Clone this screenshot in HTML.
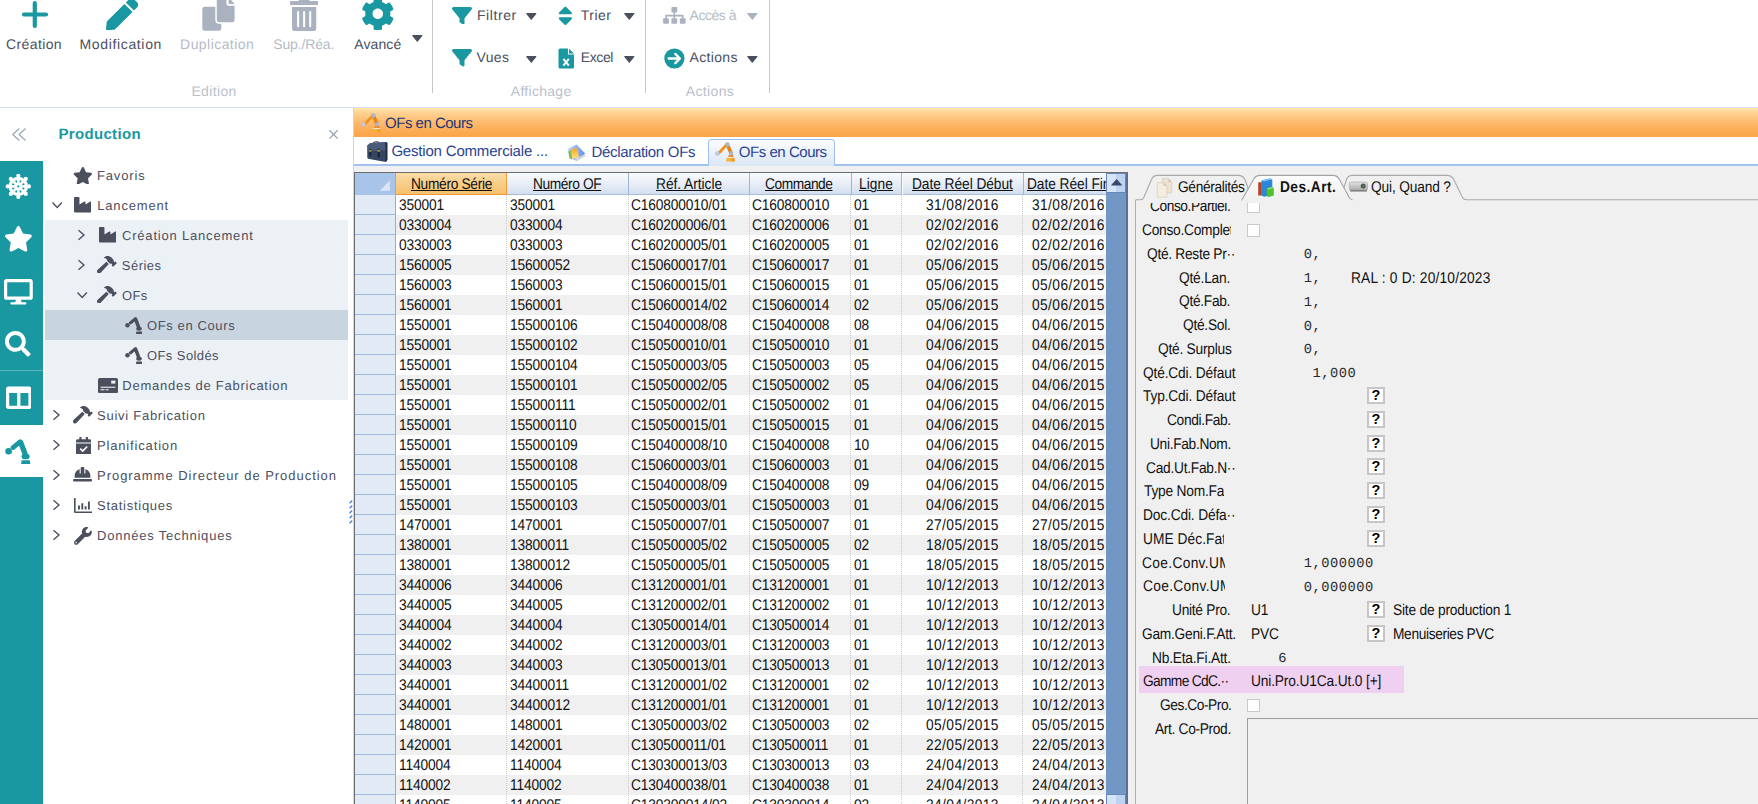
<!DOCTYPE html><html lang="fr"><head><meta charset="utf-8"><title>OFs en Cours</title><style>*{box-sizing:border-box;margin:0;padding:0}
html,body{width:1758px;height:804px;overflow:hidden;background:#fff}
body{font-family:"Liberation Sans",sans-serif;color:#000;text-rendering:geometricPrecision}
#app{position:relative;width:1758px;height:804px;overflow:hidden;background:#fff}
.abs{position:absolute}
.t{position:absolute;white-space:nowrap;line-height:1}
/* ribbon */
.rl{position:absolute;white-space:nowrap;font-size:14px;line-height:16px;color:#4b4f5e}
.rl.dis{color:#b4bbc6}
.gl{position:absolute;white-space:nowrap;font-size:14px;line-height:16px;color:#b9bfcb}
.vsep{position:absolute;top:0;width:1px;height:93px;background:#c4c6cc}
/* nav */
.tl{position:absolute;white-space:nowrap;font-size:13.4px;line-height:30px;height:30px;color:#4b4f5e;letter-spacing:.45px}
/* grid */
.row{position:absolute;left:355px;width:753px;height:20px;font-size:15.5px;line-height:20px;letter-spacing:-.17px;color:#111}
.row.alt{background:#f0f0f0}
.row span{position:absolute;top:1px;white-space:nowrap;font-size:15.5px;transform:scaleX(.8871);transform-origin:0 0}
.rh{position:absolute;left:355px;width:40px;height:20px;background:#e1eaf6;border-bottom:1px solid #9db7d4;border-right:1px solid #9db7d4}
.ch{position:absolute;top:173px;height:22px;font-size:13.75px;line-height:18px;text-align:left;text-decoration:underline;letter-spacing:-.15px;color:#111;background:linear-gradient(#f9fbfe,#e4ebf5 60%,#d3deee);border-right:1px solid #9fb6d3;border-bottom:1px solid #a9bedb;white-space:nowrap;overflow:hidden}
.vline{position:absolute;top:195px;width:0;height:609px;border-left:1px dotted #c9c9c9}
/* panel */
.pl{position:absolute;white-space:nowrap;font-size:13.75px;line-height:18px;letter-spacing:-.2px;color:#111;text-align:right}
.pv{position:absolute;white-space:nowrap;transform:scaleX(.8871);transform-origin:0 0;font-size:15.5px;line-height:18px;letter-spacing:-.2px;color:#111}
.pm{position:absolute;white-space:nowrap;font-family:"Liberation Mono",monospace;font-size:13.75px;line-height:18px;color:#2b2b2b}
.qb{position:absolute;width:17.6px;height:17px;border:2.5px solid #c6c6c6;background:#fff;font-size:14.5px;font-weight:bold;line-height:15.4px;text-align:center;color:#000}
.cb{position:absolute;width:13px;height:13px;border:1px solid #c9c9c9;background:#fff}
.ch span{font-size:15.5px;text-decoration:underline;text-underline-offset:1.4px;text-decoration-thickness:1.1px;transform:scaleX(.8871);transform-origin:0 0}
</style></head><body><div id="app">
<div class="abs" style="left:0;top:0;width:1758px;height:107px;background:#fff"></div>
<div class="abs" style="left:0;top:107px;width:1758px;height:1px;background:#d5e1ee"></div>
<svg style="position:absolute;left:18px;top:-2px" width="34" height="34" viewBox="18 -2 34 34" ><path d="M24 14.5H46M34.8 3.2V26" stroke="#1998a1" stroke-width="4.2" stroke-linecap="round" fill="none"/></svg>
<div class="rl" style="left:6.0px;top:35.90px;letter-spacing:0.385px">Création</div>
<svg style="position:absolute;left:105.6px;top:-2.1px" width="32.4" height="32.4" viewBox="0 0 512 512" preserveAspectRatio="xMidYMid meet"><path fill="#1998a1" d="M290.740 93.240l128.020 128.020-277.990 277.990-114.140 12.600C11.350 513.540-1.560 500.620.140 485.340l12.700-114.220 277.900-277.880zm207.200-19.060l-60.110-60.110c-18.750-18.750-49.160-18.750-67.910 0l-56.550 56.550 128.020 128.020 56.550-56.550c18.750-18.760 18.750-49.160 0-67.910z"/></svg>
<div class="rl" style="left:79.5px;top:35.90px;letter-spacing:0.65px">Modification</div>
<svg style="position:absolute;left:200px;top:-5px" width="38" height="38" viewBox="200 -5 38 38" ><rect x="202.3" y="6.8" width="19" height="23.9" rx="2.6" fill="#a9b2be"/><rect x="215.3" y="-6" width="21" height="29.7" rx="3.6" fill="#fff"/><path d="M219.2 -4H226.4V3.4a2.4 2.4 0 0 0 2.4 2.4H234.6V19.9a2.4 2.4 0 0 1 -2.4 2.4H219.2a2.4 2.4 0 0 1 -2.4 -2.4V-1.600a2.4 2.4 0 0 1 2.400 -2.4Z" fill="#a9b2be"/><path d="M228.6 -3V4H234.6Z" fill="#a9b2be"/></svg>
<div class="rl dis" style="left:180.1px;top:35.90px;letter-spacing:0.439px">Duplication</div>
<svg style="position:absolute;left:289.9px;top:-1.4px" width="28.3" height="32.3" viewBox="0 0 448 512" preserveAspectRatio="xMidYMid meet"><path fill="#a9b2be" d="M32 464a48 48 0 0 0 48 48h288a48 48 0 0 0 48-48V128H32zm272-256a16 16 0 0 1 32 0v224a16 16 0 0 1-32 0zm-96 0a16 16 0 0 1 32 0v224a16 16 0 0 1-32 0zm-96 0a16 16 0 0 1 32 0v224a16 16 0 0 1-32 0zM432 32H312l-9.400-18.700A24 24 0 0 0 281.100 0H166.800a23.720 23.720 0 0 0-21.400 13.300L136 32H16A16 16 0 0 0 0 48v32a16 16 0 0 0 16 16h416a16 16 0 0 0 16-16V48a16 16 0 0 0-16-16z"/></svg>
<div class="rl dis" style="left:273.25px;top:35.90px;letter-spacing:-0.141px">Sup./Réa.</div>
<svg style="position:absolute;left:361.0px;top:-2.9px" width="33.6" height="33.6" viewBox="0 0 512 512" preserveAspectRatio="xMidYMid meet"><path fill="#1998a1" d="M487.4 315.7l-42.6-24.6c4.3-23.2 4.3-47 0-70.2l42.6-24.6c4.900-2.800 7.100-8.600 5.500-14-11.100-35.600-30-67.800-54.700-94.600-3.800-4.100-10-5.100-14.800-2.300L380.800 110c-17.900-15.400-38.500-27.300-60.800-35.100V25.800c0-5.600-3.900-10.500-9.400-11.700-36.700-8.200-74.300-7.800-109.200 0-5.500 1.200-9.400 6.100-9.400 11.700V75c-22.200 7.900-42.800 19.800-60.800 35.100L88.700 85.500c-4.900-2.800-11-1.900-14.800 2.300-24.700 26.700-43.600 58.900-54.700 94.600-1.700 5.400.6 11.200 5.500 14L67.300 221c-4.300 23.200-4.300 47 0 70.200l-42.600 24.600c-4.900 2.800-7.100 8.600-5.500 14 11.100 35.600 30 67.800 54.700 94.600 3.800 4.100 10 5.100 14.800 2.300l42.600-24.600c17.900 15.400 38.500 27.300 60.800 35.100v49.200c0 5.600 3.900 10.500 9.400 11.700 36.700 8.200 74.300 7.800 109.200 0 5.500-1.200 9.400-6.100 9.400-11.700v-49.200c22.200-7.900 42.800-19.800 60.800-35.100l42.600 24.600c4.900 2.800 11 1.900 14.800-2.300 24.700-26.700 43.600-58.900 54.700-94.600 1.500-5.500-.7-11.300-5.600-14.100zM256 336c-44.100 0-80-35.900-80-80s35.900-80 80-80 80 35.900 80 80-35.900 80-80 80z"/></svg>
<div class="rl" style="left:354.25px;top:35.90px;letter-spacing:0.108px">Avancé</div>
<svg style="position:absolute;left:410.9px;top:33.5px" width="12.6" height="8.6" viewBox="-1 -1 12.6 8.6" ><path d="M.8 .6H9.799999999999999L5.3 6.0Z" fill="#4b4f5e" stroke="#4b4f5e" stroke-width="1.2" stroke-linejoin="round"/></svg>
<div class="vsep" style="left:432px"></div>
<div class="vsep" style="left:645px"></div>
<div class="vsep" style="left:769px"></div>
<svg style="position:absolute;left:451.6px;top:6.6px" width="20" height="17.5" viewBox="0 32 512 448" preserveAspectRatio="none"><path fill="#1998a1" d="M3.9 54.9C10.5 40.9 24.5 32 40 32H472c15.500 0 29.500 8.900 36.100 22.900s4.600 30.500-5.200 42.500L320 320.900V448c0 12.100-6.800 23.200-17.700 28.600s-23.800 4.300-33.500-3l-64-48c-8.100-6-12.800-15.500-12.800-25.600V320.900L9 97.300C-.7 85.400-2.800 68.800 3.900 54.900z"/></svg>
<div class="rl" style="left:477.0px;top:7.40px;letter-spacing:0.567px">Filtrer</div>
<svg style="position:absolute;left:524.6px;top:12.1px" width="12.6" height="8.6" viewBox="-1 -1 12.6 8.6" ><path d="M.8 .6H9.799999999999999L5.3 6.0Z" fill="#4b4f5e" stroke="#4b4f5e" stroke-width="1.2" stroke-linejoin="round"/></svg>
<svg style="position:absolute;left:451.6px;top:49.1px" width="20" height="17.5" viewBox="0 32 512 448" preserveAspectRatio="none"><path fill="#1998a1" d="M3.9 54.9C10.5 40.9 24.5 32 40 32H472c15.500 0 29.500 8.900 36.100 22.900s4.600 30.500-5.200 42.500L320 320.900V448c0 12.100-6.800 23.200-17.700 28.600s-23.800 4.300-33.500-3l-64-48c-8.100-6-12.800-15.500-12.800-25.600V320.900L9 97.300C-.7 85.400-2.800 68.800 3.900 54.900z"/></svg>
<div class="rl" style="left:476.5px;top:49.25px;letter-spacing:0.34px">Vues</div>
<svg style="position:absolute;left:524.6px;top:54.6px" width="12.6" height="8.6" viewBox="-1 -1 12.6 8.6" ><path d="M.8 .6H9.799999999999999L5.3 6.0Z" fill="#4b4f5e" stroke="#4b4f5e" stroke-width="1.2" stroke-linejoin="round"/></svg>
<svg style="position:absolute;left:558.2px;top:3.9px" width="14.8" height="23.7" viewBox="0 0 320 512" ><path fill="#1998a1" d="M41 288h238c21.400 0 32.100 25.900 17 41L177 448c-9.400 9.400-24.600 9.400-33.900 0L24 329c-15.100-15.100-4.400-41 17-41zm255-105L177 64c-9.400-9.400-24.600-9.400-33.900 0L24 183c-15.100 15.100-4.400 41 17 41h238c21.400 0 32.100-25.900 17-41z"/></svg>
<div class="rl" style="left:580.75px;top:7.40px;letter-spacing:0.497px">Trier</div>
<svg style="position:absolute;left:622.9px;top:12.1px" width="12.6" height="8.6" viewBox="-1 -1 12.6 8.6" ><path d="M.8 .6H9.799999999999999L5.3 6.0Z" fill="#4b4f5e" stroke="#4b4f5e" stroke-width="1.2" stroke-linejoin="round"/></svg>
<svg style="position:absolute;left:557.5px;top:47.5px" width="17" height="21" viewBox="557.5 47.500 17 21" ><path d="M559.6 47.9H568.3L573.5 53.1V66.5a1.6 1.6 0 0 1 -1.6 1.6H559.6a1.6 1.6 0 0 1 -1.6 -1.6V49.500a1.600 1.600 0 0 1 1.600 -1.600Z" fill="#1998a1"/><path d="M568 47.5V53.5H574" fill="none" stroke="#fff" stroke-width="1.1"/><path d="M562.9 58.3L568.300 65.200M568.300 58.300L562.900 65.200" stroke="#fff" stroke-width="2" fill="none"/></svg>
<div class="rl" style="left:580.75px;top:49.25px;letter-spacing:-0.397px">Excel</div>
<svg style="position:absolute;left:622.9px;top:54.6px" width="12.6" height="8.6" viewBox="-1 -1 12.6 8.6" ><path d="M.8 .6H9.799999999999999L5.3 6.0Z" fill="#4b4f5e" stroke="#4b4f5e" stroke-width="1.2" stroke-linejoin="round"/></svg>
<svg style="position:absolute;left:662px;top:6px" width="25" height="19" viewBox="662 6 25 19" ><rect x="671.400" y="6.900" width="5.900" height="5.600" rx="1.1" fill="#a9b2be"/><path d="M674.300 12V18.500M666 19V15.600H682.700V19" stroke="#a9b2be" stroke-width="1.6" fill="none"/><rect x="663.100" y="18.200" width="5.800" height="5.600" rx="1.1" fill="#a9b2be"/><rect x="671.400" y="18.200" width="5.800" height="5.600" rx="1.1" fill="#a9b2be"/><rect x="679.800" y="18.200" width="5.800" height="5.600" rx="1.1" fill="#a9b2be"/></svg>
<div class="rl dis" style="left:689.5px;top:7.40px;letter-spacing:-0.459px">Accès à</div>
<svg style="position:absolute;left:746.3px;top:12.1px" width="12.6" height="8.6" viewBox="-1 -1 12.6 8.6" ><path d="M.8 .6H9.799999999999999L5.3 6.0Z" fill="#a9b2be" stroke="#a9b2be" stroke-width="1.2" stroke-linejoin="round"/></svg>
<svg style="position:absolute;left:664px;top:47.5px" width="21" height="21" viewBox="664 47.500 21 21" ><circle cx="674.400" cy="58" r="10.100" fill="#1998a1"/><path d="M668.600 58H679.500M675.300 53.400L679.900 58L675.300 62.600" stroke="#fff" stroke-width="2.300" fill="none" stroke-linecap="round" stroke-linejoin="round"/></svg>
<div class="rl" style="left:689.5px;top:49.25px;letter-spacing:0.333px">Actions</div>
<svg style="position:absolute;left:746.3px;top:54.6px" width="12.6" height="8.6" viewBox="-1 -1 12.6 8.6" ><path d="M.8 .6H9.799999999999999L5.3 6.0Z" fill="#4b4f5e" stroke="#4b4f5e" stroke-width="1.2" stroke-linejoin="round"/></svg>
<div class="gl" style="left:191.4px;top:82.75px;letter-spacing:0.363px">Edition</div>
<div class="gl" style="left:510.75px;top:82.75px;letter-spacing:0.292px">Affichage</div>
<div class="gl" style="left:685.75px;top:82.75px;letter-spacing:0.368px">Actions</div>
<div class="abs" style="left:0;top:160.5px;width:43.4px;height:644px;background:#1998a1"></div>
<div class="abs" style="left:0;top:370.3px;width:43.4px;height:1px;background:#58b4bb"></div>
<div class="abs" style="left:0;top:424.6px;width:43.4px;height:52.8px;background:#fff"></div>
<svg style="position:absolute;left:10px;top:126px" width="18" height="17" viewBox="10 126 18 17" ><path d="M19.300 128.400L12.800 134.400L19.300 140.400M25.600 128.400L19.100 134.400L25.600 140.400" stroke="#a4acb9" stroke-width="1.400" fill="none"/></svg>
<div class="t" style="left:58.5px;top:125.5px;font-size:15px;line-height:17px;font-weight:bold;color:#1998a1;letter-spacing:0.323px">Production</div>
<svg style="position:absolute;left:327px;top:128px" width="13" height="13" viewBox="327 128 13 13" ><path d="M329.400 130.300L337.700 138.600M337.700 130.300L329.400 138.600" stroke="#9aa2ae" stroke-width="1.300" fill="none"/></svg>
<svg style="position:absolute;left:4px;top:172px" width="29" height="29" viewBox="4 172 29 29" ><circle cx="18.3" cy="186.4" r="8.100" fill="none" stroke="#fff" stroke-width="3.300"/><circle cx="18.3" cy="186.4" r="3.500" fill="#fff"/><path d="M20.30 186.40L26.30 186.40" stroke="#fff" stroke-width="2.700"/><circle cx="28.90" cy="186.40" r="2.100" fill="#fff"/><path d="M19.71 187.81L23.96 192.06" stroke="#fff" stroke-width="2.700"/><circle cx="25.80" cy="193.90" r="2.100" fill="#fff"/><path d="M18.30 188.40L18.30 194.40" stroke="#fff" stroke-width="2.700"/><circle cx="18.30" cy="197.00" r="2.100" fill="#fff"/><path d="M16.89 187.81L12.64 192.06" stroke="#fff" stroke-width="2.700"/><circle cx="10.80" cy="193.90" r="2.100" fill="#fff"/><path d="M16.30 186.40L10.30 186.40" stroke="#fff" stroke-width="2.700"/><circle cx="7.70" cy="186.40" r="2.100" fill="#fff"/><path d="M16.89 184.99L12.64 180.74" stroke="#fff" stroke-width="2.700"/><circle cx="10.80" cy="178.90" r="2.100" fill="#fff"/><path d="M18.30 184.40L18.30 178.40" stroke="#fff" stroke-width="2.700"/><circle cx="18.30" cy="175.80" r="2.100" fill="#fff"/><path d="M19.71 184.99L23.96 180.74" stroke="#fff" stroke-width="2.700"/><circle cx="25.80" cy="178.90" r="2.100" fill="#fff"/><circle cx="18.3" cy="186.4" r="1.100" fill="#1998a1"/></svg>
<svg style="position:absolute;left:3.9px;top:226.4px" width="28.8" height="25.6" viewBox="0 0 576 512" preserveAspectRatio="xMidYMid meet"><path fill="#fff" d="M259.3 17.8L194 150.2 47.9 171.5c-26.2 3.8-36.7 36.1-17.7 54.6l105.7 103-25 145.5c-4.5 26.3 23.2 46 46.4 33.7L288 439.6l130.7 68.7c23.2 12.2 50.9-7.4 46.4-33.7l-25-145.5 105.7-103c19-18.500 8.5-50.800-17.7-54.600L382 150.200 316.700 17.800c-11.700-23.600-45.600-23.900-57.400 0z"/></svg>
<svg style="position:absolute;left:3.8px;top:279px" width="28.8" height="25.6" viewBox="0 0 576 512" preserveAspectRatio="xMidYMid meet"><path fill="#fff" d="M528 0H48C21.500 0 0 21.500 0 48v320c0 26.500 21.500 48 48 48h192l-16 48h-72c-13.300 0-24 10.700-24 24s10.700 24 24 24h272c13.300 0 24-10.700 24-24s-10.700-24-24-24h-72l-16-48h192c26.500 0 48-21.500 48-48V48c0-26.500-21.500-48-48-48zm-16 352H64V64h448v288z"/></svg>
<svg style="position:absolute;left:5.3px;top:331px" width="25.6" height="25.6" viewBox="0 0 512 512" preserveAspectRatio="xMidYMid meet"><path fill="#fff" d="M505 442.7L405.3 343c-4.5-4.5-10.6-7-17-7H372c27.600-35.300 44-79.700 44-128C416 93.100 322.900 0 208 0S0 93.100 0 208s93.100 208 208 208c48.300 0 92.700-16.400 128-44v16.300c0 6.400 2.500 12.500 7 17l99.700 99.700c9.400 9.400 24.600 9.400 33.900 0l28.300-28.300c9.400-9.400 9.400-24.600.100-34zM208 336c-70.700 0-128-57.200-128-128 0-70.700 57.200-128 128-128 70.700 0 128 57.200 128 128 0 70.700-57.200 128-128 128z"/></svg>
<svg style="position:absolute;left:5.5px;top:384.9px" width="25.6" height="25.6" viewBox="0 0 512 512" preserveAspectRatio="xMidYMid meet"><path fill="#fff" d="M464 32H48C21.490 32 0 53.490 0 80v352c0 26.510 21.490 48 48 48h416c26.510 0 48-21.490 48-48V80c0-26.510-21.490-48-48-48zM224 416H64V160h160v256zm224 0H288V160h160v256z"/></svg>
<svg style="position:absolute;left:5.3px;top:439px" width="26.0" height="26.0" viewBox="0 0 26 26" ><circle cx="3.600" cy="12.300" r="3.300" fill="#1998a1"/><path d="M8 8.600L15 2.900" fill="none" stroke="#1998a1" stroke-width="4.600" stroke-linecap="round"/><path d="M15.600 3.200L19.800 14" fill="none" stroke="#1998a1" stroke-width="5.200" stroke-linecap="round"/><ellipse cx="20.600" cy="17.400" rx="4.100" ry="2.900" fill="#1998a1"/><path d="M16.700 21.200H24.700L25.300 25H16.100Z" fill="#1998a1"/></svg>
<div class="abs" style="left:45px;top:220.400px;width:303.400px;height:179.800px;background:#ecf1f5"></div>
<div class="abs" style="left:45px;top:310.400px;width:303.400px;height:29.600px;background:#c8d5e1"></div>
<svg style="position:absolute;left:72.9px;top:166.7px" width="19.7" height="17.5" viewBox="0 0 576 512" preserveAspectRatio="xMidYMid meet"><path fill="#4b4f5e" d="M259.3 17.8L194 150.2 47.9 171.5c-26.2 3.8-36.7 36.1-17.7 54.6l105.7 103-25 145.5c-4.5 26.3 23.2 46 46.4 33.7L288 439.6l130.7 68.7c23.2 12.2 50.9-7.4 46.4-33.7l-25-145.5 105.7-103c19-18.500 8.5-50.800-17.7-54.600L382 150.200 316.700 17.800c-11.700-23.600-45.600-23.900-57.400 0z"/></svg>
<div class="tl" style="left:97.0px;top:160.5px;letter-spacing:0.839px;font-size:13px">Favoris</div>
<svg style="position:absolute;left:50.5px;top:201px" width="13" height="9" viewBox="50.5 201 13 9" ><path d="M52.0 202.5L56.7 207.4L61.4 202.5" stroke="#4b4f5e" stroke-width="1.350" fill="none"/></svg>
<svg style="position:absolute;left:73.75px;top:196.2px" width="17.5" height="17.5" viewBox="0 0 512 512" preserveAspectRatio="xMidYMid meet"><path fill="#4b4f5e" d="M475.115 163.781L336 252.309v-68.280c0-18.916-20.931-30.399-36.885-20.248L160 252.309V56c0-13.255-10.745-24-24-24H24C10.745 32 0 42.745 0 56v400c0 13.255 10.745 24 24 24h464c13.255 0 24-10.745 24-24V184.029c0-18.917-20.931-30.399-36.885-20.248z"/></svg>
<div class="tl" style="left:97.25px;top:190.5px;letter-spacing:0.825px;font-size:13px">Lancement</div>
<svg style="position:absolute;left:77.1px;top:229px" width="10" height="12" viewBox="77.1 229 10 12" ><path d="M78.6 230.3L84.1 235L78.6 239.7" stroke="#4b4f5e" stroke-width="1.350" fill="none"/></svg>
<svg style="position:absolute;left:98.75px;top:226.2px" width="17.5" height="17.5" viewBox="0 0 512 512" preserveAspectRatio="xMidYMid meet"><path fill="#4b4f5e" d="M475.115 163.781L336 252.309v-68.280c0-18.916-20.931-30.399-36.885-20.248L160 252.309V56c0-13.255-10.745-24-24-24H24C10.745 32 0 42.745 0 56v400c0 13.255 10.745 24 24 24h464c13.255 0 24-10.745 24-24V184.029c0-18.917-20.931-30.399-36.885-20.248z"/></svg>
<div class="tl" style="left:122.0px;top:220.5px;letter-spacing:0.807px;font-size:13px">Création Lancement</div>
<svg style="position:absolute;left:77.1px;top:259px" width="10" height="12" viewBox="77.1 259 10 12" ><path d="M78.6 260.3L84.1 265L78.6 269.7" stroke="#4b4f5e" stroke-width="1.350" fill="none"/></svg>
<svg style="position:absolute;left:97.25px;top:255.5px" width="19.7" height="17.5" viewBox="0 0 576 512" preserveAspectRatio="xMidYMid meet"><path fill="#4b4f5e" d="M571.310 193.940l-22.630-22.630c-6.250-6.250-16.380-6.250-22.630 0l-11.310 11.310-28.900-28.900c5.630-21.310.360-44.900-16.350-61.610l-45.250-45.250c-62.480-62.480-163.790-62.480-226.280 0l90.510 45.250v18.750c0 16.970 6.740 33.250 18.750 45.250l49.140 49.140c16.710 16.710 40.300 21.980 61.610 16.350l28.900 28.900-11.310 11.310c-6.250 6.250-6.250 16.380 0 22.630l22.630 22.630c6.250 6.250 16.380 6.250 22.630 0l90.510-90.510c6.230-6.240 6.230-16.370-.020-22.620zm-286.720-15.200c-3.700-3.700-6.840-7.790-9.850-11.950L19.640 404.960c-25.570 23.880-26.260 64.190-1.530 88.930s65.050 24.050 88.930-1.530l238.130-255.070c-3.960-2.910-7.900-5.870-11.440-9.410l-49.140-49.140z"/></svg>
<div class="tl" style="left:121.8px;top:250.5px;letter-spacing:0.473px;font-size:13px">Séries</div>
<svg style="position:absolute;left:75.5px;top:291px" width="13" height="9" viewBox="75.5 291 13 9" ><path d="M77.0 292.5L81.7 297.4L86.4 292.5" stroke="#4b4f5e" stroke-width="1.350" fill="none"/></svg>
<svg style="position:absolute;left:97.25px;top:285.5px" width="19.7" height="17.5" viewBox="0 0 576 512" preserveAspectRatio="xMidYMid meet"><path fill="#4b4f5e" d="M571.310 193.940l-22.630-22.630c-6.250-6.250-16.380-6.250-22.630 0l-11.310 11.310-28.900-28.900c5.630-21.310.360-44.900-16.350-61.610l-45.250-45.250c-62.480-62.480-163.790-62.480-226.280 0l90.510 45.250v18.750c0 16.970 6.740 33.250 18.750 45.250l49.140 49.140c16.710 16.710 40.300 21.980 61.610 16.350l28.900 28.900-11.310 11.310c-6.250 6.250-6.250 16.380 0 22.630l22.630 22.630c6.250 6.250 16.380 6.250 22.630 0l90.510-90.510c6.230-6.240 6.230-16.370-.020-22.620zm-286.720-15.200c-3.700-3.700-6.840-7.790-9.850-11.950L19.640 404.960c-25.570 23.880-26.260 64.190-1.530 88.930s65.050 24.050 88.930-1.530l238.130-255.070c-3.960-2.910-7.900-5.870-11.440-9.410l-49.140-49.140z"/></svg>
<div class="tl" style="left:122.0px;top:280.5px;letter-spacing:0.396px;font-size:13px">OFs</div>
<svg style="position:absolute;left:124.75px;top:316.9px" width="17.68" height="17.68" viewBox="0 0 26 26" ><circle cx="3.600" cy="12.300" r="3.300" fill="#4b4f5e"/><path d="M8 8.600L15 2.900" fill="none" stroke="#4b4f5e" stroke-width="4.600" stroke-linecap="round"/><path d="M15.600 3.200L19.800 14" fill="none" stroke="#4b4f5e" stroke-width="5.200" stroke-linecap="round"/><ellipse cx="20.600" cy="17.400" rx="4.100" ry="2.900" fill="#4b4f5e"/><path d="M16.700 21.200H24.700L25.300 25H16.100Z" fill="#4b4f5e"/></svg>
<div class="tl" style="left:147.0px;top:310.5px;letter-spacing:0.611px;font-size:13px">OFs en Cours</div>
<svg style="position:absolute;left:124.75px;top:346.9px" width="17.68" height="17.68" viewBox="0 0 26 26" ><circle cx="3.600" cy="12.300" r="3.300" fill="#4b4f5e"/><path d="M8 8.600L15 2.900" fill="none" stroke="#4b4f5e" stroke-width="4.600" stroke-linecap="round"/><path d="M15.600 3.200L19.800 14" fill="none" stroke="#4b4f5e" stroke-width="5.200" stroke-linecap="round"/><ellipse cx="20.600" cy="17.400" rx="4.100" ry="2.900" fill="#4b4f5e"/><path d="M16.700 21.200H24.700L25.300 25H16.100Z" fill="#4b4f5e"/></svg>
<div class="tl" style="left:147.0px;top:340.5px;letter-spacing:0.408px;font-size:13px">OFs Soldés</div>
<svg style="position:absolute;left:97.7px;top:377.8px" width="20" height="15.2" viewBox="0 0 20 15.200" ><rect width="20" height="15.200" rx="1.800" fill="#4b4f5e"/><rect x="13.200" y="2.600" width="4.200" height="3" fill="#ecf1f5"/><rect x="2.600" y="8.700" width="14.800" height="1.100" fill="#ecf1f5"/><rect x="2.600" y="11.200" width="4" height="1.100" fill="#ecf1f5"/><rect x="7.600" y="11.200" width="3" height="1.100" fill="#ecf1f5"/></svg>
<div class="tl" style="left:122.3px;top:370.5px;letter-spacing:0.745px;font-size:13px">Demandes de Fabrication</div>
<svg style="position:absolute;left:52.3px;top:409px" width="10" height="12" viewBox="52.3 409 10 12" ><path d="M53.8 410.3L59.3 415L53.8 419.7" stroke="#4b4f5e" stroke-width="1.350" fill="none"/></svg>
<svg style="position:absolute;left:72.9px;top:406.0px" width="19.7" height="17.5" viewBox="0 0 576 512" preserveAspectRatio="xMidYMid meet"><path fill="#4b4f5e" d="M571.310 193.940l-22.630-22.630c-6.250-6.250-16.380-6.250-22.630 0l-11.310 11.310-28.900-28.900c5.630-21.310.360-44.900-16.350-61.610l-45.250-45.250c-62.480-62.480-163.790-62.480-226.280 0l90.510 45.250v18.750c0 16.970 6.740 33.250 18.750 45.250l49.140 49.140c16.710 16.710 40.300 21.980 61.610 16.350l28.900 28.900-11.310 11.310c-6.250 6.250-6.250 16.380 0 22.630l22.630 22.630c6.250 6.250 16.380 6.250 22.630 0l90.510-90.510c6.230-6.240 6.230-16.370-.020-22.620zm-286.720-15.200c-3.700-3.700-6.840-7.790-9.850-11.950L19.640 404.960c-25.570 23.880-26.260 64.190-1.530 88.930s65.050 24.050 88.930-1.530l238.130-255.070c-3.960-2.910-7.900-5.870-11.440-9.410l-49.140-49.140z"/></svg>
<div class="tl" style="left:97.0px;top:400.5px;letter-spacing:0.741px;font-size:13px">Suivi Fabrication</div>
<svg style="position:absolute;left:52.3px;top:439px" width="10" height="12" viewBox="52.3 439 10 12" ><path d="M53.8 440.3L59.3 445L53.8 449.7" stroke="#4b4f5e" stroke-width="1.350" fill="none"/></svg>
<svg style="position:absolute;left:75.8px;top:436.7px" width="15.3" height="17.5" viewBox="0 0 15.300 17.500" ><path d="M0 6.600H15.300V15.900a1.600 1.600 0 0 1 -1.600 1.600H1.600a1.600 1.600 0 0 1 -1.600 -1.600ZM1.600 2.200H13.700a1.600 1.600 0 0 1 1.600 1.600V5.500H0V3.800a1.600 1.600 0 0 1 1.600 -1.600Z" fill="#4b4f5e"/><rect x="3.300" y="0" width="2.200" height="3.800" rx=".5" fill="#4b4f5e"/><rect x="9.800" y="0" width="2.200" height="3.800" rx=".5" fill="#4b4f5e"/><path d="M4.300 11.700L6.700 14L11.200 9.500" stroke="#fff" stroke-width="1.700" fill="none"/></svg>
<div class="tl" style="left:97.0px;top:430.5px;letter-spacing:0.838px;font-size:13px">Planification</div>
<svg style="position:absolute;left:52.3px;top:469px" width="10" height="12" viewBox="52.3 469 10 12" ><path d="M53.8 470.3L59.3 475L53.8 479.7" stroke="#4b4f5e" stroke-width="1.350" fill="none"/></svg>
<svg style="position:absolute;left:73.1px;top:467.4px" width="19" height="14.6" viewBox="0 0 19 14.600" ><path d="M1.600 10.800V9.200A7.900 7.900 0 0 1 6.600 1.900V6.500H7.700V1.100A1.100 1.100 0 0 1 8.800 0H10.200A1.100 1.100 0 0 1 11.300 1.100V6.500H12.400V1.900A7.900 7.900 0 0 1 17.400 9.200V10.800Z" fill="#4b4f5e"/><rect x="0" y="11.900" width="19" height="2.700" rx="1" fill="#4b4f5e"/></svg>
<div class="tl" style="left:97.0px;top:460.5px;letter-spacing:0.967px;font-size:13px">Programme Directeur de Production</div>
<svg style="position:absolute;left:52.3px;top:499px" width="10" height="12" viewBox="52.3 499 10 12" ><path d="M53.8 500.3L59.3 505L53.8 509.7" stroke="#4b4f5e" stroke-width="1.350" fill="none"/></svg>
<svg style="position:absolute;left:73.6px;top:497.6px" width="18.3" height="15.2" viewBox="0 0 18.300 15.200" ><path d="M.800 0V13.600a.800 .800 0 0 0 .800 .800H18.300" stroke="#4b4f5e" stroke-width="1.600" fill="none"/><path d="M5 7.500V11.600M8.300 5.300V11.600M11.600 8.200V11.600M14.900 3.600V11.600" stroke="#4b4f5e" stroke-width="1.900" fill="none"/></svg>
<div class="tl" style="left:97.0px;top:490.5px;letter-spacing:0.733px;font-size:13px">Statistiques</div>
<svg style="position:absolute;left:52.3px;top:529px" width="10" height="12" viewBox="52.3 529 10 12" ><path d="M53.8 530.3L59.3 535L53.8 539.7" stroke="#4b4f5e" stroke-width="1.350" fill="none"/></svg>
<svg style="position:absolute;left:74.2px;top:526.8px" width="17.8" height="17.8" viewBox="0 0 512 512" preserveAspectRatio="xMidYMid meet"><path fill="#4b4f5e" d="M507.730 109.100c-2.240-9.030-13.540-12.090-20.120-5.510l-74.360 74.360-67.880-11.310-11.310-67.880 74.360-74.360c6.620-6.620 3.430-17.900-5.660-20.160-47.380-11.740-99.550.910-136.580 37.930-39.640 39.640-50.550 97.100-34.050 147.200L18.740 402.760c-24.990 24.990-24.990 65.510 0 90.500 24.990 24.990 65.510 24.990 90.500 0l213.210-213.210c50.120 16.710 107.470 5.680 147.370-34.220 37.070-37.070 49.700-89.320 37.910-136.730zM64 472c-13.250 0-24-10.750-24-24 0-13.260 10.750-24 24-24s24 10.740 24 24c0 13.250-10.750 24-24 24z"/></svg>
<div class="tl" style="left:97.0px;top:520.5px;letter-spacing:0.795px;font-size:13px">Données Techniques</div>
<svg style="position:absolute;left:349.2px;top:499.8px" width="4" height="25" viewBox="0 0 4 25" ><path d="M1 2.8L2.800 1" stroke="#3f7cdb" stroke-width="1.300" stroke-linecap="round"/><path d="M1 7.8L2.800 6" stroke="#3f7cdb" stroke-width="1.300" stroke-linecap="round"/><path d="M1 12.8L2.800 11" stroke="#3f7cdb" stroke-width="1.300" stroke-linecap="round"/><path d="M1 17.8L2.800 16" stroke="#3f7cdb" stroke-width="1.300" stroke-linecap="round"/><path d="M1 22.8L2.800 21" stroke="#3f7cdb" stroke-width="1.300" stroke-linecap="round"/></svg>
<div class="abs" style="left:353px;top:108px;width:1px;height:696px;background:#c3d8f4"></div>
<div class="abs" style="left:354px;top:108px;width:1404px;height:28.500px;background:linear-gradient(#fee6aa 0%,#fdd597 14%,#fdba6d 50%,#fca950 85%,#fca44a 100%)"></div>
<svg style="position:absolute;left:361px;top:112.9px" width="20.5" height="20.5" viewBox="0 0 20.500 20.500" ><path d="M4.200 10.800L11.600 2.700" fill="none" stroke="#f3921b" stroke-width="2.800" stroke-linecap="round"/><path d="M12.700 3.400L16.100 11.200" fill="none" stroke="#ea820e" stroke-width="3.600" stroke-linecap="round"/><circle cx="2.500" cy="11.400" r="2.200" fill="#bdbbd2"/><circle cx="2.500" cy="11.400" r=".9" fill="#dddbe9"/><rect x="10.500" y=".3" width="3.800" height="4.400" rx="1.200" fill="#b3b3bd"/><rect x="14.300" y="9.300" width="3.800" height="4.400" rx="1.200" fill="#b3b3bd"/><path d="M13.600 13.200H18.200L18.800 15.600H13Z" fill="#ea820e"/><ellipse cx="15.500" cy="15.600" rx="3.900" ry=".9" fill="#ece4d8"/><path d="M11.600 15.900H19.300L19.900 19.400H10.900Z" fill="#f8b43c"/><path d="M16.500 15.900H19.300L19.900 19.400H16.500Z" fill="#f09a28"/></svg>
<div class="t" style="left:385.1px;top:114.90px;font-size:15px;line-height:18px;color:#1f3575;letter-spacing:-0.506px;font-weight:normal">OFs en Cours</div>
<div class="abs" style="left:354px;top:136.500px;width:1404px;height:28.500px;background:#fff"></div>
<div class="abs" style="left:354px;top:164px;width:1404px;height:2px;background:#a3c2ef"></div>
<div class="abs" style="left:354px;top:166px;width:1404px;height:7px;background:#f0f0f0"></div>
<div class="abs" style="left:708.400px;top:139.100px;width:126.600px;height:26.600px;border:1.200px solid #9fc0ee;border-bottom:none;border-radius:4px 4px 0 0;background:linear-gradient(#fcfdff,#e9f0fa 55%,#dbe6f6)"></div>
<svg style="position:absolute;left:366px;top:140px" width="23" height="23" viewBox="366 140 23 23" ><path d="M373 142.900q3 -1.900 6.200 -.5" fill="none" stroke="#2a3448" stroke-width="1.100"/><path d="M367.300 145.500L370 143.300L386.300 142L387.300 143V160L385.800 161.900L368 158.800L367.300 157.500Z" fill="#35445f"/><path d="M367.500 145.500L370 143.300L386.300 142L386.600 150L367.600 151.600Z" fill="#4a5a79"/><path d="M385.300 142.100L387.300 143V160L385.800 161.900Z" fill="#202b41"/><rect x="369.500" y="149" width="1.600" height="7.200" fill="#182033"/><rect x="377.800" y="148.800" width="1.900" height="8.400" fill="#182033"/><rect x="369.400" y="150" width="1.800" height="1.800" fill="#b89a3e"/><rect x="377.600" y="149.800" width="2.300" height="2" fill="#b89a3e"/></svg>
<div class="t" style="left:391.4px;top:143.30px;font-size:15px;line-height:18px;color:#2a4390;letter-spacing:-0.187px;font-weight:normal">Gestion Commerciale ...</div>
<svg style="position:absolute;left:566px;top:143px" width="21" height="20" viewBox="566 143 21 20" ><defs><linearGradient id="gb" x1="0" y1="0" x2="1" y2="0"><stop offset="0" stop-color="#c6d6f5"/><stop offset="1" stop-color="#5f8fe6"/></linearGradient><linearGradient id="go" x1="0" y1="0" x2="0" y2="1"><stop offset="0" stop-color="#f9a21f"/><stop offset="1" stop-color="#fde47c"/></linearGradient></defs><path d="M567.800 148.800L576.500 144.600L585.200 153.600L576.800 161L570 158.200Z" fill="url(#gb)"/><path d="M575 158.800L585 154.300L585.500 156L576.500 161.400Z" fill="#cdd6e4"/><path d="M568.300 151.500L571.500 150L572 159.600L569.500 158.200Z" fill="#7fb85a"/><path d="M570.900 149.300L577.600 147.900L578.900 157.300L572.100 158.800Z" fill="url(#go)"/></svg>
<div class="t" style="left:591.4px;top:143.80px;font-size:15px;line-height:18px;color:#2a4390;letter-spacing:-0.305px;font-weight:normal">Déclaration OFs</div>
<svg style="position:absolute;left:714.6px;top:141.6px" width="20.5" height="20.5" viewBox="0 0 20.500 20.500" ><path d="M4.200 10.800L11.600 2.700" fill="none" stroke="#f3921b" stroke-width="2.800" stroke-linecap="round"/><path d="M12.700 3.400L16.100 11.200" fill="none" stroke="#ea820e" stroke-width="3.600" stroke-linecap="round"/><circle cx="2.500" cy="11.400" r="2.200" fill="#bdbbd2"/><circle cx="2.500" cy="11.400" r=".9" fill="#dddbe9"/><rect x="10.500" y=".3" width="3.800" height="4.400" rx="1.200" fill="#b3b3bd"/><rect x="14.300" y="9.300" width="3.800" height="4.400" rx="1.200" fill="#b3b3bd"/><path d="M13.600 13.200H18.200L18.800 15.600H13Z" fill="#ea820e"/><ellipse cx="15.500" cy="15.600" rx="3.900" ry=".9" fill="#ece4d8"/><path d="M11.600 15.900H19.300L19.900 19.400H10.900Z" fill="#f8b43c"/><path d="M16.500 15.900H19.300L19.900 19.400H16.500Z" fill="#f09a28"/></svg>
<div class="t" style="left:738.8px;top:143.80px;font-size:15px;line-height:18px;color:#2a4390;letter-spacing:-0.465px;font-weight:normal">OFs en Cours</div>
<div class="abs" style="left:354px;top:172px;width:773.500px;height:632px;background:#6d6d6d"></div>
<div class="abs" style="left:355px;top:173px;width:771px;height:631px;background:#fff"></div>
<div class="row" style="top:195px;left:395.500px;width:710.500px"><span style="left:3.2px">350001</span><span style="left:114.6px">350001</span><span style="left:235.6px">C160800010/01</span><span style="left:356.7px">C160800010</span><span style="left:458.2px">01</span><span style="left:530.8px;letter-spacing:.46px">31/08/2016</span><span style="left:636.8px;letter-spacing:.46px">31/08/2016</span></div>
<div class="row alt" style="top:215px;left:395.500px;width:710.500px"><span style="left:3.2px">0330004</span><span style="left:114.6px">0330004</span><span style="left:235.6px">C160200006/01</span><span style="left:356.7px">C160200006</span><span style="left:458.2px">01</span><span style="left:530.8px;letter-spacing:.46px">02/02/2016</span><span style="left:636.8px;letter-spacing:.46px">02/02/2016</span></div>
<div class="row" style="top:235px;left:395.500px;width:710.500px"><span style="left:3.2px">0330003</span><span style="left:114.6px">0330003</span><span style="left:235.6px">C160200005/01</span><span style="left:356.7px">C160200005</span><span style="left:458.2px">01</span><span style="left:530.8px;letter-spacing:.46px">02/02/2016</span><span style="left:636.8px;letter-spacing:.46px">02/02/2016</span></div>
<div class="row alt" style="top:255px;left:395.500px;width:710.500px"><span style="left:3.2px">1560005</span><span style="left:114.6px">15600052</span><span style="left:235.6px">C150600017/01</span><span style="left:356.7px">C150600017</span><span style="left:458.2px">01</span><span style="left:530.8px;letter-spacing:.46px">05/06/2015</span><span style="left:636.8px;letter-spacing:.46px">05/06/2015</span></div>
<div class="row" style="top:275px;left:395.500px;width:710.500px"><span style="left:3.2px">1560003</span><span style="left:114.6px">1560003</span><span style="left:235.6px">C150600015/01</span><span style="left:356.7px">C150600015</span><span style="left:458.2px">01</span><span style="left:530.8px;letter-spacing:.46px">05/06/2015</span><span style="left:636.8px;letter-spacing:.46px">05/06/2015</span></div>
<div class="row alt" style="top:295px;left:395.500px;width:710.500px"><span style="left:3.2px">1560001</span><span style="left:114.6px">1560001</span><span style="left:235.6px">C150600014/02</span><span style="left:356.7px">C150600014</span><span style="left:458.2px">02</span><span style="left:530.8px;letter-spacing:.46px">05/06/2015</span><span style="left:636.8px;letter-spacing:.46px">05/06/2015</span></div>
<div class="row" style="top:315px;left:395.500px;width:710.500px"><span style="left:3.2px">1550001</span><span style="left:114.6px">155000106</span><span style="left:235.6px">C150400008/08</span><span style="left:356.7px">C150400008</span><span style="left:458.2px">08</span><span style="left:530.8px;letter-spacing:.46px">04/06/2015</span><span style="left:636.8px;letter-spacing:.46px">04/06/2015</span></div>
<div class="row alt" style="top:335px;left:395.500px;width:710.500px"><span style="left:3.2px">1550001</span><span style="left:114.6px">155000102</span><span style="left:235.6px">C150500010/01</span><span style="left:356.7px">C150500010</span><span style="left:458.2px">01</span><span style="left:530.8px;letter-spacing:.46px">04/06/2015</span><span style="left:636.8px;letter-spacing:.46px">04/06/2015</span></div>
<div class="row" style="top:355px;left:395.500px;width:710.500px"><span style="left:3.2px">1550001</span><span style="left:114.6px">155000104</span><span style="left:235.6px">C150500003/05</span><span style="left:356.7px">C150500003</span><span style="left:458.2px">05</span><span style="left:530.8px;letter-spacing:.46px">04/06/2015</span><span style="left:636.8px;letter-spacing:.46px">04/06/2015</span></div>
<div class="row alt" style="top:375px;left:395.500px;width:710.500px"><span style="left:3.2px">1550001</span><span style="left:114.6px">155000101</span><span style="left:235.6px">C150500002/05</span><span style="left:356.7px">C150500002</span><span style="left:458.2px">05</span><span style="left:530.8px;letter-spacing:.46px">04/06/2015</span><span style="left:636.8px;letter-spacing:.46px">04/06/2015</span></div>
<div class="row" style="top:395px;left:395.500px;width:710.500px"><span style="left:3.2px">1550001</span><span style="left:114.6px">155000111</span><span style="left:235.6px">C150500002/01</span><span style="left:356.7px">C150500002</span><span style="left:458.2px">01</span><span style="left:530.8px;letter-spacing:.46px">04/06/2015</span><span style="left:636.8px;letter-spacing:.46px">04/06/2015</span></div>
<div class="row alt" style="top:415px;left:395.500px;width:710.500px"><span style="left:3.2px">1550001</span><span style="left:114.6px">155000110</span><span style="left:235.6px">C150500015/01</span><span style="left:356.7px">C150500015</span><span style="left:458.2px">01</span><span style="left:530.8px;letter-spacing:.46px">04/06/2015</span><span style="left:636.8px;letter-spacing:.46px">04/06/2015</span></div>
<div class="row" style="top:435px;left:395.500px;width:710.500px"><span style="left:3.2px">1550001</span><span style="left:114.6px">155000109</span><span style="left:235.6px">C150400008/10</span><span style="left:356.7px">C150400008</span><span style="left:458.2px">10</span><span style="left:530.8px;letter-spacing:.46px">04/06/2015</span><span style="left:636.8px;letter-spacing:.46px">04/06/2015</span></div>
<div class="row alt" style="top:455px;left:395.500px;width:710.500px"><span style="left:3.2px">1550001</span><span style="left:114.6px">155000108</span><span style="left:235.6px">C150600003/01</span><span style="left:356.7px">C150600003</span><span style="left:458.2px">01</span><span style="left:530.8px;letter-spacing:.46px">04/06/2015</span><span style="left:636.8px;letter-spacing:.46px">04/06/2015</span></div>
<div class="row" style="top:475px;left:395.500px;width:710.500px"><span style="left:3.2px">1550001</span><span style="left:114.6px">155000105</span><span style="left:235.6px">C150400008/09</span><span style="left:356.7px">C150400008</span><span style="left:458.2px">09</span><span style="left:530.8px;letter-spacing:.46px">04/06/2015</span><span style="left:636.8px;letter-spacing:.46px">04/06/2015</span></div>
<div class="row alt" style="top:495px;left:395.500px;width:710.500px"><span style="left:3.2px">1550001</span><span style="left:114.6px">155000103</span><span style="left:235.6px">C150500003/01</span><span style="left:356.7px">C150500003</span><span style="left:458.2px">01</span><span style="left:530.8px;letter-spacing:.46px">04/06/2015</span><span style="left:636.8px;letter-spacing:.46px">04/06/2015</span></div>
<div class="row" style="top:515px;left:395.500px;width:710.500px"><span style="left:3.2px">1470001</span><span style="left:114.6px">1470001</span><span style="left:235.6px">C150500007/01</span><span style="left:356.7px">C150500007</span><span style="left:458.2px">01</span><span style="left:530.8px;letter-spacing:.46px">27/05/2015</span><span style="left:636.8px;letter-spacing:.46px">27/05/2015</span></div>
<div class="row alt" style="top:535px;left:395.500px;width:710.500px"><span style="left:3.2px">1380001</span><span style="left:114.6px">13800011</span><span style="left:235.6px">C150500005/02</span><span style="left:356.7px">C150500005</span><span style="left:458.2px">02</span><span style="left:530.8px;letter-spacing:.46px">18/05/2015</span><span style="left:636.8px;letter-spacing:.46px">18/05/2015</span></div>
<div class="row" style="top:555px;left:395.500px;width:710.500px"><span style="left:3.2px">1380001</span><span style="left:114.6px">13800012</span><span style="left:235.6px">C150500005/01</span><span style="left:356.7px">C150500005</span><span style="left:458.2px">01</span><span style="left:530.8px;letter-spacing:.46px">18/05/2015</span><span style="left:636.8px;letter-spacing:.46px">18/05/2015</span></div>
<div class="row alt" style="top:575px;left:395.500px;width:710.500px"><span style="left:3.2px">3440006</span><span style="left:114.6px">3440006</span><span style="left:235.6px">C131200001/01</span><span style="left:356.7px">C131200001</span><span style="left:458.2px">01</span><span style="left:530.8px;letter-spacing:.46px">10/12/2013</span><span style="left:636.8px;letter-spacing:.46px">10/12/2013</span></div>
<div class="row" style="top:595px;left:395.500px;width:710.500px"><span style="left:3.2px">3440005</span><span style="left:114.6px">3440005</span><span style="left:235.6px">C131200002/01</span><span style="left:356.7px">C131200002</span><span style="left:458.2px">01</span><span style="left:530.8px;letter-spacing:.46px">10/12/2013</span><span style="left:636.8px;letter-spacing:.46px">10/12/2013</span></div>
<div class="row alt" style="top:615px;left:395.500px;width:710.500px"><span style="left:3.2px">3440004</span><span style="left:114.6px">3440004</span><span style="left:235.6px">C130500014/01</span><span style="left:356.7px">C130500014</span><span style="left:458.2px">01</span><span style="left:530.8px;letter-spacing:.46px">10/12/2013</span><span style="left:636.8px;letter-spacing:.46px">10/12/2013</span></div>
<div class="row" style="top:635px;left:395.500px;width:710.500px"><span style="left:3.2px">3440002</span><span style="left:114.6px">3440002</span><span style="left:235.6px">C131200003/01</span><span style="left:356.7px">C131200003</span><span style="left:458.2px">01</span><span style="left:530.8px;letter-spacing:.46px">10/12/2013</span><span style="left:636.8px;letter-spacing:.46px">10/12/2013</span></div>
<div class="row alt" style="top:655px;left:395.500px;width:710.500px"><span style="left:3.2px">3440003</span><span style="left:114.6px">3440003</span><span style="left:235.6px">C130500013/01</span><span style="left:356.7px">C130500013</span><span style="left:458.2px">01</span><span style="left:530.8px;letter-spacing:.46px">10/12/2013</span><span style="left:636.8px;letter-spacing:.46px">10/12/2013</span></div>
<div class="row" style="top:675px;left:395.500px;width:710.500px"><span style="left:3.2px">3440001</span><span style="left:114.6px">34400011</span><span style="left:235.6px">C131200001/02</span><span style="left:356.7px">C131200001</span><span style="left:458.2px">02</span><span style="left:530.8px;letter-spacing:.46px">10/12/2013</span><span style="left:636.8px;letter-spacing:.46px">10/12/2013</span></div>
<div class="row alt" style="top:695px;left:395.500px;width:710.500px"><span style="left:3.2px">3440001</span><span style="left:114.6px">34400012</span><span style="left:235.6px">C131200001/01</span><span style="left:356.7px">C131200001</span><span style="left:458.2px">01</span><span style="left:530.8px;letter-spacing:.46px">10/12/2013</span><span style="left:636.8px;letter-spacing:.46px">10/12/2013</span></div>
<div class="row" style="top:715px;left:395.500px;width:710.500px"><span style="left:3.2px">1480001</span><span style="left:114.6px">1480001</span><span style="left:235.6px">C130500003/02</span><span style="left:356.7px">C130500003</span><span style="left:458.2px">02</span><span style="left:530.8px;letter-spacing:.46px">05/05/2015</span><span style="left:636.8px;letter-spacing:.46px">05/05/2015</span></div>
<div class="row alt" style="top:735px;left:395.500px;width:710.500px"><span style="left:3.2px">1420001</span><span style="left:114.6px">1420001</span><span style="left:235.6px">C130500011/01</span><span style="left:356.7px">C130500011</span><span style="left:458.2px">01</span><span style="left:530.8px;letter-spacing:.46px">22/05/2013</span><span style="left:636.8px;letter-spacing:.46px">22/05/2013</span></div>
<div class="row" style="top:755px;left:395.500px;width:710.500px"><span style="left:3.2px">1140004</span><span style="left:114.6px">1140004</span><span style="left:235.6px">C130300013/03</span><span style="left:356.7px">C130300013</span><span style="left:458.2px">03</span><span style="left:530.8px;letter-spacing:.46px">24/04/2013</span><span style="left:636.8px;letter-spacing:.46px">24/04/2013</span></div>
<div class="row alt" style="top:775px;left:395.500px;width:710.500px"><span style="left:3.2px">1140002</span><span style="left:114.6px">1140002</span><span style="left:235.6px">C130400038/01</span><span style="left:356.7px">C130400038</span><span style="left:458.2px">01</span><span style="left:530.8px;letter-spacing:.46px">24/04/2013</span><span style="left:636.8px;letter-spacing:.46px">24/04/2013</span></div>
<div class="row" style="top:795px;left:395.500px;width:710.500px"><span style="left:3.2px">1140005</span><span style="left:114.6px">1140005</span><span style="left:235.6px">C130300014/02</span><span style="left:356.7px">C130300014</span><span style="left:458.2px">02</span><span style="left:530.8px;letter-spacing:.46px">24/04/2013</span><span style="left:636.8px;letter-spacing:.46px">24/04/2013</span></div>
<div class="vline" style="left:506px"></div>
<div class="vline" style="left:627.5px"></div>
<div class="vline" style="left:749px"></div>
<div class="vline" style="left:850.4px"></div>
<div class="vline" style="left:901.2px"></div>
<div class="vline" style="left:1022.4px"></div>
<div class="abs" style="left:355px;top:195px;width:40.500px;height:609px;background:repeating-linear-gradient(#e2eaf6 0,#e2eaf6 19px,#9fb9d8 19px,#9fb9d8 20px);border-right:1.200px solid #94aece"></div>
<div class="abs" style="left:355px;top:173px;width:40px;height:22px;background:#a9c4e9"></div>
<svg style="position:absolute;left:379px;top:180px" width="12" height="12" viewBox="379 180 12 12" ><path d="M379.700 190.800H389.800V180.500Z" fill="#dbe6f6"/></svg>
<div class="ch" style="left:394.5px;width:112.5px;background:linear-gradient(#f9dca6,#f7cd86 55%,#f4c06b);border-right:1px solid #f29a3c;border-bottom:1.500px solid #f29a3c;border-left:1px solid #f29a3c;"><span style="position:absolute;left:15.3px;top:2.53px;letter-spacing:-0.360px">Numéro Série</span></div>
<div class="ch" style="left:507px;width:121.5px;"><span style="position:absolute;left:26.4px;top:2.53px;letter-spacing:-0.454px">Numéro OF</span></div>
<div class="ch" style="left:628.5px;width:121.5px;"><span style="position:absolute;left:27.1px;top:2.53px;letter-spacing:-0.045px">Réf. Article</span></div>
<div class="ch" style="left:750px;width:101.6px;"><span style="position:absolute;left:15.4px;top:2.53px;letter-spacing:-0.504px">Commande</span></div>
<div class="ch" style="left:851.6px;width:50.9px;"><span style="position:absolute;left:7.8px;top:2.53px;letter-spacing:0.078px">Ligne</span></div>
<div class="ch" style="left:902.5px;width:121.1px;"><span style="position:absolute;left:9.3px;top:2.53px;letter-spacing:-0.064px">Date Réel Début</span></div>
<div class="ch" style="left:1023.6px;width:83.4px;"><span style="position:absolute;left:3.3px;top:2.53px;letter-spacing:-0.064px">Date Réel Fin</span></div>
<div class="abs" style="left:1106px;top:173px;width:20.500px;height:631px;background:#7297c5;border-right:1.200px solid #5b6f9c"></div>
<div class="abs" style="left:1106.300px;top:173px;width:19.400px;height:20.200px;background:linear-gradient(90deg,#d5e4f7 0,#d5e4f7 50%,#bdd3f0 50%);border:1.200px solid #6686bd"></div>
<svg style="position:absolute;left:1108px;top:176px" width="16" height="12" viewBox="1108 176 16 12" ><path d="M1110.800 185.600L1116.600 179L1122.400 185.600Z" fill="#39456a"/></svg>
<div class="abs" style="left:1106.300px;top:794.400px;width:19.400px;height:12px;background:linear-gradient(90deg,#d5e4f7 0,#d5e4f7 50%,#bdd3f0 50%);border:1.200px solid #6686bd"></div>
<div class="abs" style="left:1127.500px;top:165.800px;width:631px;height:640px;background:#f0f0f0"></div>
<svg style="position:absolute;left:1128px;top:170px" width="630" height="34" viewBox="1128 170 630 34" ><path d="M1340 199.800L1346 181C1347 177 1349 175.400 1352 175.400H1447C1450.500 175.400 1452.500 177 1454 180L1462.500 197.500C1463.500 199.300 1464.500 199.800 1466.500 199.800H1758" fill="#f0f0f0" stroke="#a9a9a9" stroke-width="1.100"/><path d="M1135.500 199.800H1140.500C1142 199.800 1143 199 1143.800 197.500L1151.500 179.500C1152.800 176.500 1154.500 175.400 1157.500 175.400H1238C1241.500 175.400 1243.500 176.500 1245 179.500L1252 199.800" fill="#f0f0f0" stroke="#a9a9a9" stroke-width="1.100"/><defs><linearGradient id="gt" x1="0" y1="0" x2="0" y2="1"><stop offset="0" stop-color="#fcfcfc"/><stop offset=".7" stop-color="#f2f2f2"/><stop offset="1" stop-color="#f0f0f0"/></linearGradient></defs><path d="M1241.500 200.500L1253.500 179.500C1255 176.500 1257 175.400 1260 175.400H1332.500C1336 175.400 1338 176.500 1339.500 179.500L1349.500 198C1350.300 199.300 1351 199.800 1352.500 199.800" fill="url(#gt)" stroke="#a3a3a3" stroke-width="1.100"/><path d="M1242.500 200.300H1351" stroke="#f0f0f0" stroke-width="1.600"/></svg>
<div class="abs" style="left:1135px;top:199.800px;width:1.100px;height:605px;background:#b0b0b0"></div>
<svg style="position:absolute;left:1156px;top:178px" width="17" height="20" viewBox="1156 178 17 20" ><path d="M1162.300 178.600H1168.500L1171.800 182V193H1162.300Z" fill="#ece3d3" stroke="#d2c7b4" stroke-width=".6"/><path d="M1168.500 178.600V182H1171.800Z" fill="#cfc3ae"/><path d="M1157.200 182.700H1163.600L1166.900 186.100V197.200H1157.200Z" fill="#f4ede0" stroke="#d2c7b4" stroke-width=".6"/><path d="M1163.600 182.700V186.100H1166.900Z" fill="#cfc3ae"/></svg>
<svg style="position:absolute;left:1257px;top:177px" width="18" height="21" viewBox="1257 177 18 21" ><rect x="1258.200" y="182.300" width="3.600" height="13.200" fill="#b9431f"/><path d="M1261.500 180.500L1270 178.400L1272.300 179.500V195L1264 196.700L1261.500 195.500Z" fill="#2b86d9"/><path d="M1261.500 180.500L1270 178.400L1272.300 179.500L1264 181.600Z" fill="#7cc0f4"/><path d="M1266.700 188.500L1272 187.100L1273.800 188V195.500L1268.500 197.100L1266.700 196Z" fill="#4fc22a"/><path d="M1266.700 188.500L1272 187.100L1273.800 188L1268.500 189.500Z" fill="#8be06a"/></svg>
<svg style="position:absolute;left:1348px;top:180px" width="21" height="13" viewBox="1348 180 21 13" ><defs><linearGradient id="gc" x1="0" y1="0" x2="0" y2="1"><stop offset="0" stop-color="#e2e2e2"/><stop offset="1" stop-color="#a9a9a9"/></linearGradient></defs><rect x="1349.300" y="182" width="18.200" height="8.400" rx="1.600" fill="url(#gc)" stroke="#a3a3a3" stroke-width=".6"/><rect x="1350" y="190.200" width="17" height="1.400" rx=".7" fill="#6f6f6f"/><circle cx="1363.200" cy="186.100" r="2.500" fill="#555"/><circle cx="1363.200" cy="186.100" r="1" fill="#2e9b43"/></svg>
<div class="pv" style="left:1177.9px;top:179.40px;letter-spacing:-0.392px;font-weight:normal;">Généralités</div>
<div class="pv" style="left:1280.3px;top:179.40px;letter-spacing:0.488px;font-weight:bold;">Des.Art.</div>
<div class="pv" style="left:1371.4px;top:179.40px;letter-spacing:-0.187px;font-weight:normal;">Qui, Quand ?</div>
<div class="abs" style="left:1138.900px;top:665.500px;width:265px;height:27.900px;background:#f0d0f0"></div>
<div class="abs" style="left:1136px;top:203px;width:100.5px;height:604px;overflow:hidden"><div class="pv" style="left:14.4px;top:-4.70px;letter-spacing:-0.489px">Conso.Partiel.</div></div>
<div class="abs" style="left:1136px;top:203px;width:94.6px;height:604px;overflow:hidden"><div class="pv" style="left:6.0px;top:19.05px;letter-spacing:-0.293px">Conso.Complet</div></div>
<div class="abs" style="left:1136px;top:203px;width:100.5px;height:604px;overflow:hidden"><div class="pv" style="left:10.7px;top:42.80px;letter-spacing:-0.327px">Qté. Reste Pr··</div></div>
<div class="abs" style="left:1136px;top:203px;width:100.5px;height:604px;overflow:hidden"><div class="pv" style="left:43.4px;top:66.55px;letter-spacing:-0.232px">Qté.Lan.</div></div>
<div class="abs" style="left:1136px;top:203px;width:100.5px;height:604px;overflow:hidden"><div class="pv" style="left:43.4px;top:90.30px;letter-spacing:-0.338px">Qté.Fab.</div></div>
<div class="abs" style="left:1136px;top:203px;width:100.5px;height:604px;overflow:hidden"><div class="pv" style="left:47.0px;top:114.05px;letter-spacing:-0.308px">Qté.Sol.</div></div>
<div class="abs" style="left:1136px;top:203px;width:100.5px;height:604px;overflow:hidden"><div class="pv" style="left:22.3px;top:137.80px;letter-spacing:-0.266px">Qté. Surplus</div></div>
<div class="abs" style="left:1136px;top:203px;width:100.5px;height:604px;overflow:hidden"><div class="pv" style="left:7.1px;top:161.55px;letter-spacing:-0.179px">Qté.Cdi. Défaut</div></div>
<div class="abs" style="left:1136px;top:203px;width:100.5px;height:604px;overflow:hidden"><div class="pv" style="left:7.1px;top:185.30px;letter-spacing:-0.179px">Typ.Cdi. Défaut</div></div>
<div class="abs" style="left:1136px;top:203px;width:100.5px;height:604px;overflow:hidden"><div class="pv" style="left:30.7px;top:209.05px;letter-spacing:-0.391px">Condi.Fab.</div></div>
<div class="abs" style="left:1136px;top:203px;width:100.5px;height:604px;overflow:hidden"><div class="pv" style="left:13.5px;top:232.80px;letter-spacing:-0.360px">Uni.Fab.Nom.</div></div>
<div class="abs" style="left:1136px;top:203px;width:100.5px;height:604px;overflow:hidden"><div class="pv" style="left:10.0px;top:256.55px;letter-spacing:-0.300px">Cad.Ut.Fab.N··</div></div>
<div class="abs" style="left:1136px;top:203px;width:88.2px;height:604px;overflow:hidden"><div class="pv" style="left:8.2px;top:280.30px;letter-spacing:-0.249px">Type Nom.Fa</div></div>
<div class="abs" style="left:1136px;top:203px;width:100.5px;height:604px;overflow:hidden"><div class="pv" style="left:7.1px;top:304.05px;letter-spacing:-0.177px">Doc.Cdi. Défa··</div></div>
<div class="abs" style="left:1136px;top:203px;width:88.2px;height:604px;overflow:hidden"><div class="pv" style="left:6.5px;top:327.80px;letter-spacing:0.050px">UME Déc.Fat</div></div>
<div class="abs" style="left:1136px;top:203px;width:88.8px;height:604px;overflow:hidden"><div class="pv" style="left:6.0px;top:351.55px;letter-spacing:0.377px">Coe.Conv.UM</div></div>
<div class="abs" style="left:1136px;top:203px;width:89.4px;height:604px;overflow:hidden"><div class="pv" style="left:7.1px;top:375.30px;letter-spacing:0.366px">Coe.Conv.UM</div></div>
<div class="abs" style="left:1136px;top:203px;width:100.5px;height:604px;overflow:hidden"><div class="pv" style="left:36.1px;top:399.05px;letter-spacing:-0.309px">Unité Pro.</div></div>
<div class="abs" style="left:1136px;top:203px;width:100.5px;height:604px;overflow:hidden"><div class="pv" style="left:6.0px;top:422.80px;letter-spacing:-0.294px">Gam.Geni.F.Att.</div></div>
<div class="abs" style="left:1136px;top:203px;width:100.5px;height:604px;overflow:hidden"><div class="pv" style="left:16.2px;top:446.55px;letter-spacing:-0.239px">Nb.Eta.Fi.Att.</div></div>
<div class="abs" style="left:1136px;top:203px;width:100.5px;height:604px;overflow:hidden"><div class="pv" style="left:7.1px;top:470.30px;letter-spacing:-0.733px">Gamme CdC.··</div></div>
<div class="abs" style="left:1136px;top:203px;width:100.5px;height:604px;overflow:hidden"><div class="pv" style="left:23.5px;top:494.05px;letter-spacing:-0.504px">Ges.Co-Pro.</div></div>
<div class="abs" style="left:1136px;top:203px;width:100.5px;height:604px;overflow:hidden"><div class="pv" style="left:19.1px;top:517.80px;letter-spacing:-0.375px">Art. Co-Prod.</div></div>
<div class="abs" style="left:1136px;top:203px;width:200px;height:604px;overflow:hidden"><div class="cb" style="left:111px;top:-2.75px"></div></div>
<div class="abs" style="left:1136px;top:203px;width:200px;height:604px;overflow:hidden"><div class="cb" style="left:111px;top:21.00px"></div></div>
<div class="abs" style="left:1136px;top:203px;width:200px;height:604px;overflow:hidden"><div class="cb" style="left:111px;top:496.00px"></div></div>
<div class="pm" style="left:1303.8px;top:247.44px;letter-spacing:.5px">0,</div>
<div class="pm" style="left:1303.8px;top:271.19px;letter-spacing:.5px">1,</div>
<div class="pm" style="left:1303.8px;top:294.94px;letter-spacing:.5px">1,</div>
<div class="pm" style="left:1303.8px;top:318.69px;letter-spacing:.5px">0,</div>
<div class="pm" style="left:1303.8px;top:342.44px;letter-spacing:.5px">0,</div>
<div class="pm" style="left:1312.6px;top:366.19px;letter-spacing:.5px">1,000</div>
<div class="pm" style="left:1303.8px;top:556.19px;letter-spacing:.5px">1,000000</div>
<div class="pm" style="left:1303.8px;top:579.94px;letter-spacing:.5px">0,000000</div>
<div class="pm" style="left:1278.3px;top:651.19px;letter-spacing:.5px">6</div>
<div class="pv" style="left:1351.0px;top:269.75px;letter-spacing:0.212px;font-weight:normal;">RAL : 0 D: 20/10/2023</div>
<div class="qb" style="left:1367.100px;top:387.00px">?</div>
<div class="qb" style="left:1367.100px;top:410.75px">?</div>
<div class="qb" style="left:1367.100px;top:434.50px">?</div>
<div class="qb" style="left:1367.100px;top:458.25px">?</div>
<div class="qb" style="left:1367.100px;top:482.00px">?</div>
<div class="qb" style="left:1367.100px;top:505.75px">?</div>
<div class="qb" style="left:1367.100px;top:529.50px">?</div>
<div class="qb" style="left:1367.100px;top:600.75px">?</div>
<div class="qb" style="left:1367.100px;top:624.50px">?</div>
<div class="pv" style="left:1250.9px;top:601.85px;letter-spacing:-0.225px;font-weight:normal;">U1</div>
<div class="pv" style="left:1250.9px;top:625.60px;letter-spacing:-0.225px;font-weight:normal;">PVC</div>
<div class="pv" style="left:1392.5px;top:601.85px;letter-spacing:-0.232px;font-weight:normal;">Site de production 1</div>
<div class="pv" style="left:1392.5px;top:625.60px;letter-spacing:-0.408px;font-weight:normal;">Menuiseries PVC</div>
<div class="pv" style="left:1250.9px;top:673.10px;letter-spacing:-0.169px;font-weight:normal;">Uni.Pro.U1Ca.Ut.0 [+]</div>
<div class="abs" style="left:1247px;top:717.800px;width:520px;height:100px;border:1.200px solid #9d9d9d;background:#f0f0f0"></div>
</div></body></html>
